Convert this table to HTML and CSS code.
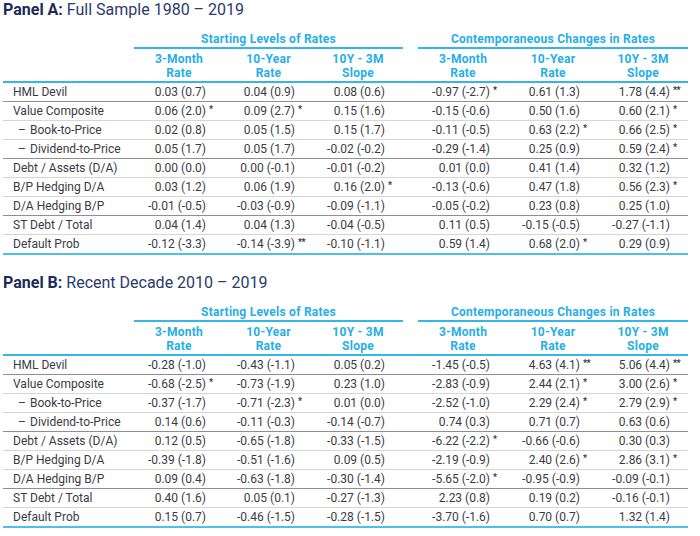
FILE: index.html
```html
<!DOCTYPE html>
<html>
<head>
<meta charset="utf-8">
<link rel="stylesheet" href="styles.css">
</head>
<body>
<section class="panel">
  <h2 class="panel-title"><b>Panel A:</b> Full Sample 1980 – 2019</h2>
  <table class="rates">
    <colgroup>
      <col class="c-label"><col class="c-num"><col class="c-num2"><col class="c-num"><col class="c-gap"><col class="c-num"><col class="c-num"><col class="c-num">
    </colgroup>
    <thead>
      <tr class="group-row">
        <th></th>
        <th colspan="3" class="group">Starting Levels of Rates</th>
        <th class="gap"></th>
        <th colspan="3" class="group">Contemporaneous Changes in Rates</th>
      </tr>
      <tr class="head-row">
        <th></th>
        <th>3-Month<br>Rate</th><th>10-Year<br>Rate</th><th>10Y - 3M<br>Slope</th>
        <th class="gap"></th>
        <th>3-Month<br>Rate</th><th>10-Year<br>Rate</th><th>10Y - 3M<br>Slope</th>
      </tr>
    </thead>
    <tbody>
      <tr class="sep"><td class="label">HML Devil</td><td><span class="v">0.03 (0.7)</span></td><td><span class="v">0.04 (0.9)</span></td><td><span class="v">0.08 (0.6)</span></td><td></td><td><span class="v">-0.97 (-2.7)<sup>*</sup></span></td><td><span class="v">0.61 (1.3)</span></td><td><span class="v">1.78 (4.4)<sup>**</sup></span></td></tr>
      <tr><td class="label">Value Composite</td><td><span class="v">0.06 (2.0)<sup>*</sup></span></td><td><span class="v">0.09 (2.7)<sup>*</sup></span></td><td><span class="v">0.15 (1.6)</span></td><td></td><td><span class="v">-0.15 (-0.6)</span></td><td><span class="v">0.50 (1.6)</span></td><td><span class="v">0.60 (2.1)<sup>*</sup></span></td></tr>
      <tr><td class="label sub"><span class="dash">–</span>Book-to-Price</td><td><span class="v">0.02 (0.8)</span></td><td><span class="v">0.05 (1.5)</span></td><td><span class="v">0.15 (1.7)</span></td><td></td><td><span class="v">-0.11 (-0.5)</span></td><td><span class="v">0.63 (2.2)<sup>*</sup></span></td><td><span class="v">0.66 (2.5)<sup>*</sup></span></td></tr>
      <tr class="sep"><td class="label sub"><span class="dash">–</span>Dividend-to-Price</td><td><span class="v">0.05 (1.7)</span></td><td><span class="v">0.05 (1.7)</span></td><td><span class="v">-0.02 (-0.2)</span></td><td></td><td><span class="v">-0.29 (-1.4)</span></td><td><span class="v">0.25 (0.9)</span></td><td><span class="v">0.59 (2.4)<sup>*</sup></span></td></tr>
      <tr><td class="label">Debt / Assets (D/A)</td><td><span class="v">0.00 (0.0)</span></td><td><span class="v">0.00 (-0.1)</span></td><td><span class="v">-0.01 (-0.2)</span></td><td></td><td><span class="v">0.01 (0.0)</span></td><td><span class="v">0.41 (1.4)</span></td><td><span class="v">0.32 (1.2)</span></td></tr>
      <tr><td class="label">B/P Hedging D/A</td><td><span class="v">0.03 (1.2)</span></td><td><span class="v">0.06 (1.9)</span></td><td><span class="v">0.16 (2.0)<sup>*</sup></span></td><td></td><td><span class="v">-0.13 (-0.6)</span></td><td><span class="v">0.47 (1.8)</span></td><td><span class="v">0.56 (2.3)<sup>*</sup></span></td></tr>
      <tr class="sep"><td class="label">D/A Hedging B/P</td><td><span class="v">-0.01 (-0.5)</span></td><td><span class="v">-0.03 (-0.9)</span></td><td><span class="v">-0.09 (-1.1)</span></td><td></td><td><span class="v">-0.05 (-0.2)</span></td><td><span class="v">0.23 (0.8)</span></td><td><span class="v">0.25 (1.0)</span></td></tr>
      <tr><td class="label">ST Debt / Total</td><td><span class="v">0.04 (1.4)</span></td><td><span class="v">0.04 (1.3)</span></td><td><span class="v">-0.04 (-0.5)</span></td><td></td><td><span class="v">0.11 (0.5)</span></td><td><span class="v">-0.15 (-0.5)</span></td><td><span class="v">-0.27 (-1.1)</span></td></tr>
      <tr class="last"><td class="label">Default Prob</td><td><span class="v">-0.12 (-3.3)</span></td><td><span class="v">-0.14 (-3.9)<sup>**</sup></span></td><td><span class="v">-0.10 (-1.1)</span></td><td></td><td><span class="v">0.59 (1.4)</span></td><td><span class="v">0.68 (2.0)<sup>*</sup></span></td><td><span class="v">0.29 (0.9)</span></td></tr>
    </tbody>
  </table>
</section>

<section class="panel">
  <h2 class="panel-title"><b>Panel B:</b> Recent Decade 2010 – 2019</h2>
  <table class="rates">
    <colgroup>
      <col class="c-label"><col class="c-num"><col class="c-num2"><col class="c-num"><col class="c-gap"><col class="c-num"><col class="c-num"><col class="c-num">
    </colgroup>
    <thead>
      <tr class="group-row">
        <th></th>
        <th colspan="3" class="group">Starting Levels of Rates</th>
        <th class="gap"></th>
        <th colspan="3" class="group">Contemporaneous Changes in Rates</th>
      </tr>
      <tr class="head-row">
        <th></th>
        <th>3-Month<br>Rate</th><th>10-Year<br>Rate</th><th>10Y - 3M<br>Slope</th>
        <th class="gap"></th>
        <th>3-Month<br>Rate</th><th>10-Year<br>Rate</th><th>10Y - 3M<br>Slope</th>
      </tr>
    </thead>
    <tbody>
      <tr class="sep"><td class="label">HML Devil</td><td><span class="v">-0.28 (-1.0)</span></td><td><span class="v">-0.43 (-1.1)</span></td><td><span class="v">0.05 (0.2)</span></td><td></td><td><span class="v">-1.45 (-0.5)</span></td><td><span class="v">4.63 (4.1)<sup>**</sup></span></td><td><span class="v">5.06 (4.4)<sup>**</sup></span></td></tr>
      <tr><td class="label">Value Composite</td><td><span class="v">-0.68 (-2.5)<sup>*</sup></span></td><td><span class="v">-0.73 (-1.9)</span></td><td><span class="v">0.23 (1.0)</span></td><td></td><td><span class="v">-2.83 (-0.9)</span></td><td><span class="v">2.44 (2.1)<sup>*</sup></span></td><td><span class="v">3.00 (2.6)<sup>*</sup></span></td></tr>
      <tr><td class="label sub"><span class="dash">–</span>Book-to-Price</td><td><span class="v">-0.37 (-1.7)</span></td><td><span class="v">-0.71 (-2.3)<sup>*</sup></span></td><td><span class="v">0.01 (0.0)</span></td><td></td><td><span class="v">-2.52 (-1.0)</span></td><td><span class="v">2.29 (2.4)<sup>*</sup></span></td><td><span class="v">2.79 (2.9)<sup>*</sup></span></td></tr>
      <tr class="sep"><td class="label sub"><span class="dash">–</span>Dividend-to-Price</td><td><span class="v">0.14 (0.6)</span></td><td><span class="v">-0.11 (-0.3)</span></td><td><span class="v">-0.14 (-0.7)</span></td><td></td><td><span class="v">0.74 (0.3)</span></td><td><span class="v">0.71 (0.7)</span></td><td><span class="v">0.63 (0.6)</span></td></tr>
      <tr><td class="label">Debt / Assets (D/A)</td><td><span class="v">0.12 (0.5)</span></td><td><span class="v">-0.65 (-1.8)</span></td><td><span class="v">-0.33 (-1.5)</span></td><td></td><td><span class="v">-6.22 (-2.2)<sup>*</sup></span></td><td><span class="v">-0.66 (-0.6)</span></td><td><span class="v">0.30 (0.3)</span></td></tr>
      <tr><td class="label">B/P Hedging D/A</td><td><span class="v">-0.39 (-1.8)</span></td><td><span class="v">-0.51 (-1.6)</span></td><td><span class="v">0.09 (0.5)</span></td><td></td><td><span class="v">-2.19 (-0.9)</span></td><td><span class="v">2.40 (2.6)<sup>*</sup></span></td><td><span class="v">2.86 (3.1)<sup>*</sup></span></td></tr>
      <tr class="sep"><td class="label">D/A Hedging B/P</td><td><span class="v">0.09 (0.4)</span></td><td><span class="v">-0.63 (-1.8)</span></td><td><span class="v">-0.30 (-1.4)</span></td><td></td><td><span class="v">-5.65 (-2.0)<sup>*</sup></span></td><td><span class="v">-0.95 (-0.9)</span></td><td><span class="v">-0.09 (-0.1)</span></td></tr>
      <tr><td class="label">ST Debt / Total</td><td><span class="v">0.40 (1.6)</span></td><td><span class="v">0.05 (0.1)</span></td><td><span class="v">-0.27 (-1.3)</span></td><td></td><td><span class="v">2.23 (0.8)</span></td><td><span class="v">0.19 (0.2)</span></td><td><span class="v">-0.16 (-0.1)</span></td></tr>
      <tr class="last"><td class="label">Default Prob</td><td><span class="v">0.15 (0.7)</span></td><td><span class="v">-0.46 (-1.5)</span></td><td><span class="v">-0.28 (-1.5)</span></td><td></td><td><span class="v">-3.70 (-1.6)</span></td><td><span class="v">0.70 (0.7)</span></td><td><span class="v">1.32 (1.4)</span></td></tr>
    </tbody>
  </table>
</section>
</body>
</html>
```

FILE: styles.css
```css
html, body {
  margin: 0;
  padding: 0;
  background: #ffffff;
}
body {
  padding-left: 3px;
  font-family: Roboto, "Liberation Sans", Arial, sans-serif;
  color: #3b3b45;
}
.panel {
  margin-bottom: 18px;
}
.panel-title {
  margin: 0;
  font-size: 16px;
  line-height: 20px;
  font-weight: 400;
  color: #2a3a6c;
  white-space: nowrap;
}
.panel-title b {
  font-weight: 700;
  color: #1c2a5a;
}
.rates {
  border-collapse: collapse;
  table-layout: fixed;
  width: 685px;
  font-size: 12px;
}
.c-label { width: 131px; }
.c-num { width: 90px; }
.c-num2 { width: 89px; }
.c-gap { width: 15px; }

.rates th {
  padding: 0;
  font-weight: 700;
  color: #27aee6;
  text-align: center;
  line-height: 14px;
  letter-spacing: 0.25px;
}
.group-row th {
  height: 14px;
  padding-top: 12px;
  padding-bottom: 1px;
  vertical-align: bottom;
}
.group-row th.group {
  border-bottom: 2px solid #34b6ea;
}
.head-row th {
  padding-top: 3px;
  padding-bottom: 1px;
  border-bottom: 2px solid #34b6ea;
}
.rates td {
  padding: 0 18px 0 0;
  height: 18px;
  line-height: 18px;
  text-align: right;
  white-space: nowrap;
  border-bottom: 1px solid #d6d6d6;
}
.rates td.label {
  text-align: left;
  padding-left: 10px;
  padding-right: 0;
}
.rates td.sub {
  padding-left: 15px;
}
.dash {
  display: inline-block;
  width: 12px;
}
.rates tr.sep td {
  border-bottom: 1px solid #8e8e94;
}
.rates tr.last td {
  border-bottom: 2px solid #4dbfec;
}
.v {
  position: relative;
}
.v sup {
  position: absolute;
  left: 100%;
  top: 1px;
  margin-left: 3px;
  font-size: 9px;
  line-height: 9px;
  font-weight: 700;
  letter-spacing: -0.5px;
  color: #2f2f3a;
}
```
